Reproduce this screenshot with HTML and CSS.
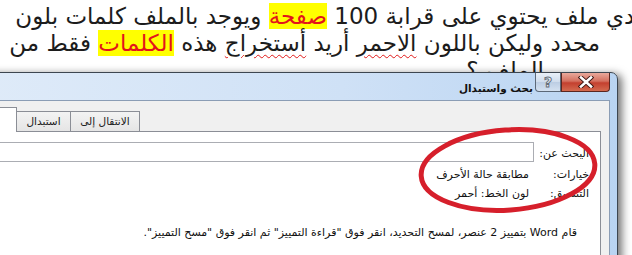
FILE: index.html
```html
<!DOCTYPE html>
<html lang="ar">
<head>
    <meta charset="UTF-8">
    <meta name="viewport" content="width=device-width, initial-scale=1.0">
    <title>بحث واستبدال</title>
    <link rel="stylesheet" href="styles.css">
</head>
<body>
    <!-- question text -->
    <div class="post">
        <p class="line line-1">لدي ملف يحتوي على قرابة 100 <mark class="hl">صفحة</mark> ويوجد بالملف كلمات بلون</p>
        <p class="line line-2">محدد وليكن باللون <span class="typo">الاحمر</span> أريد <span class="typo">أستخراج</span> هذه <mark class="hl">الكلمات</mark> فقط من</p>
        <p class="line line-3">الملف ؟</p>
    </div>

    <!-- find & replace window -->
    <div class="dialog">
        <div class="title-bar">
            <span class="title">بحث واستبدال</span>
            <button class="cap-btn help-btn">?</button>
            <button class="cap-btn close-btn">
                <svg width="16" height="12" viewBox="0 0 16 12">
                    <path d="M3 1.5 L13 10.5 M13 1.5 L3 10.5" stroke="#3b1512" stroke-width="4.4" stroke-linecap="square"/>
                    <path d="M3 1.5 L13 10.5 M13 1.5 L3 10.5" stroke="#ffffff" stroke-width="2.6" stroke-linecap="square"/>
                </svg>
            </button>
        </div>
        <div class="client">
            <div class="tabs">
                <div class="tab tab-active">البحث</div>
                <div class="tab tab-replace">استبدال</div>
                <div class="tab tab-goto">الانتقال إلى</div>
            </div>
            <div class="panel">
                <div class="fields">
                    <span class="label">ال<u>ب</u>حث عن:</span>
                    <div class="input"></div>
                    <span class="label">خيارات:</span>
                    <span class="value">مطابقة حالة الأحرف</span>
                    <span class="label">التنسيق:</span>
                    <span class="value">لون الخط: أحمر</span>
                </div>
                <p class="message">قام Word بتمييز 2 عنصر، لمسح التحديد، انقر فوق "قراءة التمييز" ثم انقر فوق "مسح التمييز".</p>
            </div>
        </div>
        <svg class="circle" width="200" height="100" viewBox="0 0 200 100">
            <ellipse cx="100" cy="50" rx="87" ry="40" fill="none" stroke="#d61f2b" stroke-width="5" transform="rotate(-4 100 50)"/>
        </svg>
    </div>
</body>
</html>
```

FILE: styles.css
```css
body {
    margin: 0;
    background-color: #ffffff;
    font-family: 'DejaVu Sans', sans-serif;
    overflow: hidden;
    position: relative;
    height: 255px;
}

.post {
    padding-top: 3px;
}

.line {
    margin: 0;
    direction: rtl;
    white-space: nowrap;
    font-size: 23px;
    line-height: 27px;
    color: #1c1c1c;
}

.line-1 {
    margin-right: -11px;
}

.line-2 {
    margin-right: 32px;
}

.line-3 {
    margin-right: 88px;
}

.hl {
    background-color: #ffff00;
    color: #e3141b;
}

.typo {
    text-decoration: underline wavy #e01818;
    text-decoration-thickness: 1px;
    text-underline-offset: 3px;
}

/* window */
.dialog {
    position: absolute;
    left: -70px;
    top: 72px;
    width: 672px;
    height: 200px;
    padding: 0 7px;
    border: 1px solid #3d4650;
    border-radius: 7px 7px 0 0;
    background: linear-gradient(90deg, #e1ecf9 0%, #cfe1f6 60%, #b9d4f2 100%);
    box-shadow: 4px 2px 8px rgba(0, 0, 0, 0.55);
}

.title-bar {
    height: 27px;
    display: flex;
    align-items: flex-start;
    justify-content: flex-end;
}

.title {
    font-size: 10.5px;
    font-weight: bold;
    color: #111;
    margin-top: 9px;
    margin-right: 2px;
    direction: rtl;
}

.cap-btn {
    height: 19px;
    border: 1px solid #5b6878;
    border-top: none;
    padding: 0;
    display: flex;
    align-items: center;
    justify-content: center;
}

.help-btn {
    width: 26px;
    border-radius: 0 0 0 4px;
    background: linear-gradient(#e9f0f8, #cfdcec 50%, #bccde3 51%, #d4e1f0);
    font-family: 'DejaVu Sans', sans-serif;
    font-size: 14px;
    font-weight: bold;
    color: #f2f5f9;
    -webkit-text-stroke: 1px #66707c;
}

.close-btn {
    width: 49px;
    border-color: #5a2620;
    border-radius: 0 0 4px 0;
    background: linear-gradient(#e9a99c, #d4705f 45%, #c4402f 55%, #d36a4f);
}

.client {
    height: 170px;
    background-color: #f0f0f0;
    border: 1px solid #8b9db5;
}

.tabs {
    display: flex;
    align-items: flex-start;
    padding: 6px 0 0 15px;
    direction: ltr;
}

.tab {
    height: 19px;
    margin-top: 4px;
    border: 1px solid #8b8e96;
    border-bottom: none;
    margin-right: -1px;
    background: linear-gradient(#f3f3f3, #e5e5e5);
    font-size: 10.5px;
    line-height: 19px;
    text-align: center;
    color: #222;
}

.tab-active {
    width: 61px;
    height: 24px;
    margin-top: 0;
    margin-bottom: -1px;
    background: #ffffff;
    position: relative;
    z-index: 1;
}

.tab-replace {
    width: 53px;
}

.tab-goto {
    width: 68px;
}

.panel {
    margin: 0 8px 0 0;
    height: 140px;
    background-color: #ffffff;
    border: 1px solid #8b8e96;
    border-left: none;
    direction: rtl;
    padding: 10px 11px 0 0;
    font-size: 11px;
    color: #111;
}

.fields {
    display: grid;
    grid-template-columns: 55px 1fr;
    align-items: center;
    row-gap: 2px;
}

.label {
    line-height: 17px;
}

.value {
    padding-right: 5px;
    line-height: 17px;
}

.input {
    height: 18px;
    border: 1px solid #abadb3;
    margin-bottom: 2px;
}

.message {
    margin: 24px 12px 0 0;
    white-space: nowrap;
}

.circle {
    position: absolute;
    left: 477px;
    top: 47px;
}
```
